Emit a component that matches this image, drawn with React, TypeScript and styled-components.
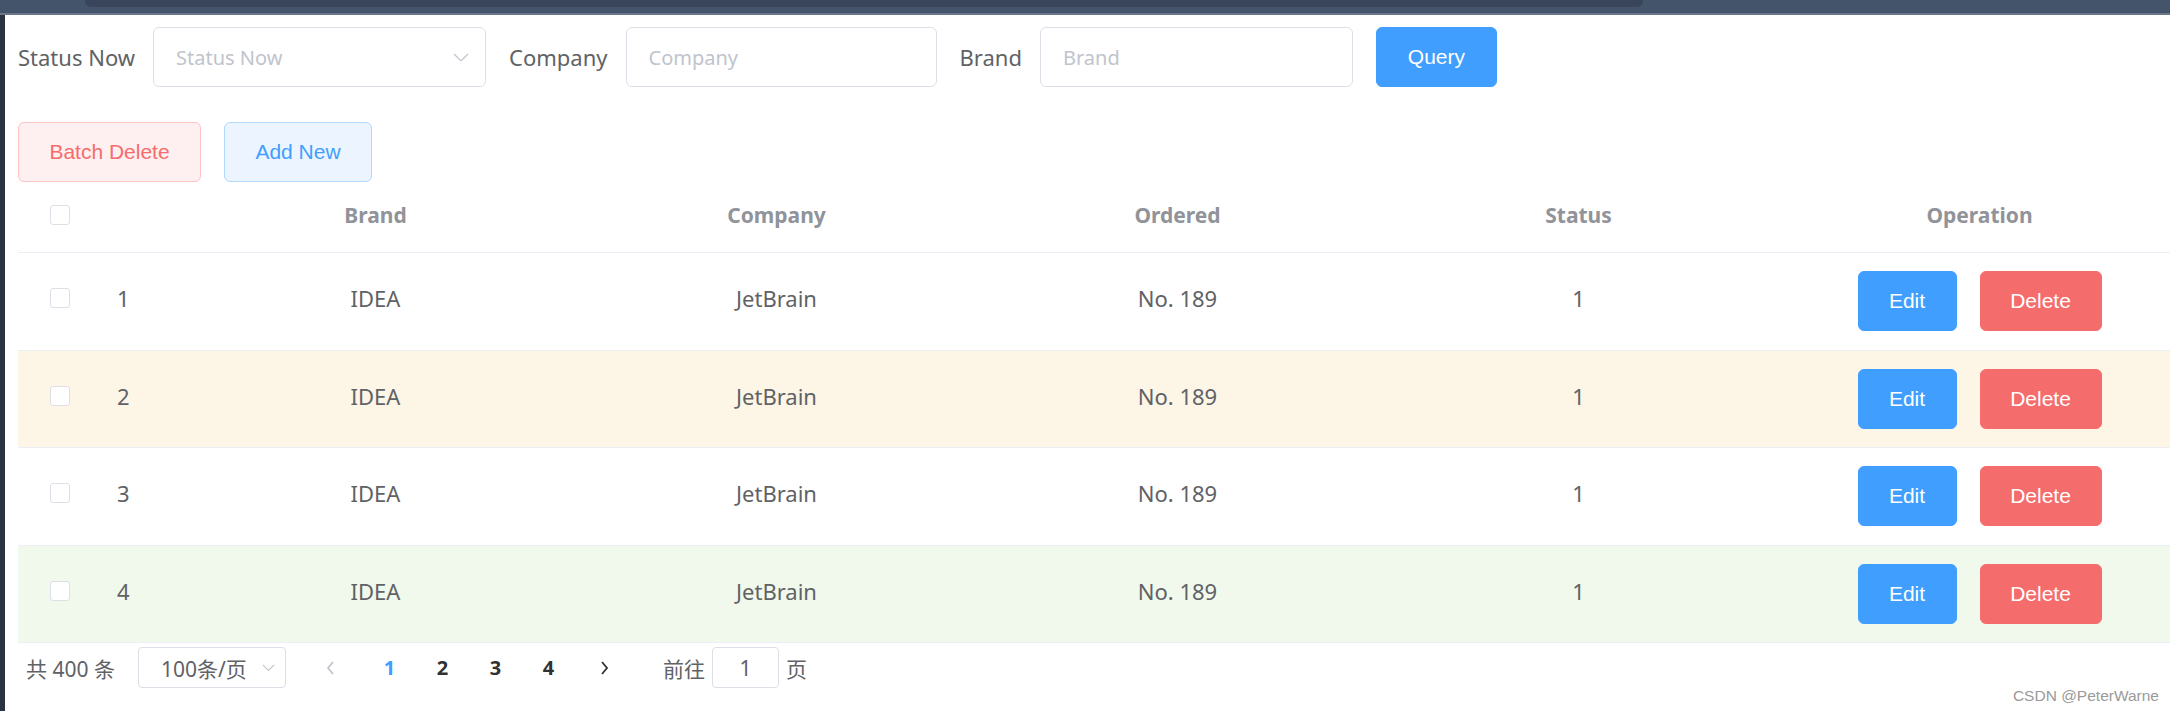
import React from 'react';
import styled, { createGlobalStyle } from 'styled-components';

const GlobalStyle = createGlobalStyle`
	html, body {
		margin: 0;
		padding: 0;
		background: #ffffff;
		overflow: hidden;
	}

	* {
		box-sizing: border-box;
	}
`;

const baseFont = `"Noto Sans", "Noto Sans CJK SC", sans-serif`;
const buttonFont = `"Liberation Sans", Arial, sans-serif`;

const Screen = styled.div`
	width: 2170px;
	height: 711px;
	display: flex;
	flex-direction: column;
	background: #2a3340;
	font-family: ${baseFont};
	position: relative;
	overflow: hidden;
`;

const TopChrome = styled.div`
	height: 15px;
	flex-shrink: 0;
	background: #44546b;
	border-bottom: 2px solid #6b7789;
	padding-left: 85px;
	padding-right: 527px;
`;

const TabStrip = styled.div`
	height: 7px;
	background: #39455a;
	border-radius: 0 0 6px 6px;
`;

const Page = styled.div`
	flex: 1;
	margin-left: 5px;
	background: #ffffff;
	padding: 12px 0 0 13px;
	display: flex;
	flex-direction: column;
`;

const FilterForm = styled.form`
	display: flex;
	align-items: center;
	height: 60px;
	margin-bottom: 35px;
`;

const FormItem = styled.div`
	display: flex;
	align-items: center;
	margin-right: 23px;
`;

const Label = styled.label`
	font-size: 22px;
	color: #606266;
	padding-right: 18px;
	white-space: nowrap;
`;

const InputBox = styled.div<{ $width: number }>`
	width: ${(p) => p.$width}px;
	height: 60px;
	border: 1px solid #dcdfe6;
	border-radius: 6px;
	display: flex;
	align-items: center;
	justify-content: space-between;
	padding: 0 16px 0 22px;
	font-size: 20px;
	color: #c0c4cc;
	background: #ffffff;
`;

const Button = styled.button<{ $tone: 'primary' | 'danger' | 'plainDanger' | 'plainPrimary'; $width: number }>`
	width: ${(p) => p.$width}px;
	height: 60px;
	border-radius: 6px;
	font-family: ${buttonFont};
	font-size: 21px;
	cursor: pointer;
	padding: 0;
	flex-shrink: 0;
	${(p) => {
		switch (p.$tone) {
			case 'primary':
				return 'background: #409eff; border: 1px solid #409eff; color: #ffffff;';
			case 'danger':
				return 'background: #f56c6c; border: 1px solid #f56c6c; color: #ffffff;';
			case 'plainDanger':
				return 'background: #fef0f0; border: 1px solid #fbc4c4; color: #f56c6c;';
			default:
				return 'background: #ecf5ff; border: 1px solid #b3d8ff; color: #409eff;';
		}
	}}
`;

const ActionBar = styled.div`
	display: flex;
	gap: 23px;
`;

const Table = styled.div`
	display: flex;
	flex-direction: column;
`;

const columns = '82px 75px repeat(5, 401px)';

const HeaderRow = styled.div`
	display: grid;
	grid-template-columns: ${columns};
	height: 71px;
	border-bottom: 1px solid #ebeef5;
	align-items: center;
	padding-bottom: 5px;
`;

const Row = styled.div<{ $bg: string }>`
	display: grid;
	grid-template-columns: ${columns};
	height: 97.5px;
	border-bottom: 1px solid #ebeef5;
	align-items: center;
	background: ${(p) => p.$bg};
`;

const HeadCell = styled.div`
	font-size: 21px;
	font-weight: 700;
	color: #909399;
	display: flex;
	justify-content: center;
`;

const Cell = styled.div<{ $align?: 'left' | 'center'; $actions?: boolean }>`
	font-size: 22px;
	color: #606266;
	display: flex;
	align-items: center;
	justify-content: ${(p) => (p.$align === 'left' ? 'flex-start' : 'center')};
	padding-left: ${(p) => (p.$align === 'left' ? '17px' : '0')};
	padding-bottom: ${(p) => (p.$actions ? '0' : '6px')};
	gap: 23px;
`;

const Checkbox = styled.span`
	width: 20px;
	height: 20px;
	border: 1px solid #dcdfe6;
	border-radius: 3px;
	background: #ffffff;
	display: inline-block;
	margin-left: 1px;
`;

const Pager = styled.div`
	display: flex;
	align-items: center;
	height: 41px;
	margin-top: 4px;
	padding-left: 8px;
	font-size: 21px;
	color: #606266;
`;

const Total = styled.span`
	margin-right: 23px;
`;

const SizeSelect = styled.div`
	width: 148px;
	height: 41px;
	border: 1px solid #dcdfe6;
	border-radius: 4px;
	display: flex;
	align-items: center;
	justify-content: space-between;
	padding: 0 10px 0 22px;
	margin-right: 18px;
	color: #606266;
`;

const PageButton = styled.span<{ $active?: boolean; $gap?: string }>`
	width: 53px;
	height: 41px;
	display: flex;
	align-items: center;
	justify-content: center;
	font-weight: 700;
	font-size: 20px;
	margin: ${(p) => p.$gap || '0'};
	color: ${(p) => (p.$active ? '#409eff' : '#303133')};
`;

const Jumper = styled.div`
	display: flex;
	align-items: center;
	gap: 7px;
	margin-left: 31px;
`;

const JumpInput = styled.div`
	width: 67px;
	height: 41px;
	border: 1px solid #dcdfe6;
	border-radius: 4px;
	display: flex;
	align-items: center;
	justify-content: center;
	color: #606266;
`;

const Watermark = styled.div`
	position: absolute;
	right: 11px;
	bottom: 6px;
	font-family: ${buttonFont};
	font-size: 15.5px;
	color: #9a9a9a;
`;

const ChevronDown = ({ size = 16 }: { size?: number }) => (
	<svg width={size} height={size * 0.56} viewBox="0 0 16 9" fill="none">
		<path d="M1 1l7 7 7-7" stroke="#c0c4cc" strokeWidth="1.3" />
	</svg>
);

const Arrow = ({ dir, color }: { dir: 'left' | 'right'; color: string }) => (
	<svg width="10" height="16" viewBox="0 0 10 16" fill="none">
		<path d={dir === 'left' ? 'M8 2L3 8l5 6' : 'M2 2l5 6-5 6'} stroke={color} strokeWidth="1.8" />
	</svg>
);

const rows = [
	{ id: 1, bg: '#ffffff' },
	{ id: 2, bg: '#fdf5e6' },
	{ id: 3, bg: '#ffffff' },
	{ id: 4, bg: '#f0f9eb' },
];

const App = () => {
	return (
		<>
			<GlobalStyle />
			<Screen>
				<TopChrome>
					<TabStrip />
				</TopChrome>
				<Page>
					<FilterForm>
						<FormItem>
							<Label>Status Now</Label>
							<InputBox $width={333}>
								Status Now
								<ChevronDown />
							</InputBox>
						</FormItem>
						<FormItem>
							<Label>Company</Label>
							<InputBox $width={311}>Company</InputBox>
						</FormItem>
						<FormItem>
							<Label>Brand</Label>
							<InputBox $width={313}>Brand</InputBox>
						</FormItem>
						<Button type="button" $tone="primary" $width={121}>Query</Button>
					</FilterForm>

					<ActionBar>
						<Button type="button" $tone="plainDanger" $width={183}>Batch Delete</Button>
						<Button type="button" $tone="plainPrimary" $width={148}>Add New</Button>
					</ActionBar>

					<Table>
						<HeaderRow>
							<Cell $actions><Checkbox /></Cell>
							<div />
							<HeadCell>Brand</HeadCell>
							<HeadCell>Company</HeadCell>
							<HeadCell>Ordered</HeadCell>
							<HeadCell>Status</HeadCell>
							<HeadCell>Operation</HeadCell>
						</HeaderRow>
						{rows.map((row) => (
							<Row key={row.id} $bg={row.bg}>
								<Cell><Checkbox /></Cell>
								<Cell $align="left">{row.id}</Cell>
								<Cell>IDEA</Cell>
								<Cell>JetBrain</Cell>
								<Cell>No. 189</Cell>
								<Cell>1</Cell>
								<Cell $actions>
									<Button type="button" $tone="primary" $width={99}>Edit</Button>
									<Button type="button" $tone="danger" $width={122}>Delete</Button>
								</Cell>
							</Row>
						))}
					</Table>

					<Pager>
						<Total>共 400 条</Total>
						<SizeSelect>
							100条/页
							<ChevronDown size={13} />
						</SizeSelect>
						<PageButton $gap="0 6px 0 0"><Arrow dir="left" color="#c0c4cc" /></PageButton>
						<PageButton $active>1</PageButton>
						<PageButton>2</PageButton>
						<PageButton>3</PageButton>
						<PageButton>4</PageButton>
						<PageButton $gap="0 0 0 4px"><Arrow dir="right" color="#303133" /></PageButton>
						<Jumper>
							前往
							<JumpInput>1</JumpInput>
							页
						</Jumper>
					</Pager>
				</Page>
				<Watermark>CSDN @PeterWarne</Watermark>
			</Screen>
		</>
	);
};

export default App;
